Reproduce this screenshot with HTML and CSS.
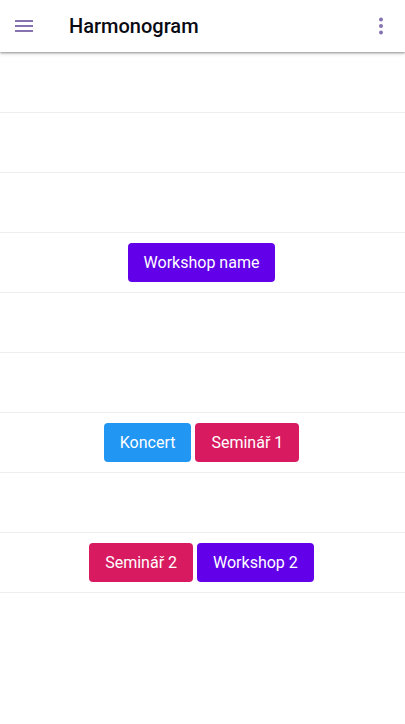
FILE: index.html
```html
<!DOCTYPE html>
<html>
<head>
<meta charset="utf-8">
<link rel="stylesheet" href="styles.css">
</head>
<body>
<header class="toolbar">
  <button class="icon-btn menu" aria-label="menu">
    <svg width="24" height="24" viewBox="0 0 24 24"><path d="M3 6h18v2H3zM3 11h18v2H3zM3 16h18v2H3z" fill="currentColor"/></svg>
  </button>
  <h1 class="title">Harmonogram</h1>
  <button class="icon-btn more" aria-label="more">
    <svg width="24" height="24" viewBox="0 0 24 24"><circle cx="12" cy="5.5" r="2" fill="currentColor"/><circle cx="12" cy="12" r="2" fill="currentColor"/><circle cx="12" cy="18.5" r="2" fill="currentColor"/></svg>
  </button>
</header>
<main class="schedule">
  <div class="row"></div>
  <div class="row"></div>
  <div class="row"></div>
  <div class="row"><span class="chip purple">Workshop name</span></div>
  <div class="row"></div>
  <div class="row"></div>
  <div class="row"><span class="chip blue">Koncert</span><span class="chip pink">Seminář 1</span></div>
  <div class="row"></div>
  <div class="row"><span class="chip pink">Seminář 2</span><span class="chip purple">Workshop 2</span></div>
</main>
</body>
</html>
```
FILE: styles.css
```css
* { box-sizing: border-box; }
html, body { margin: 0; padding: 0; background: #fff; }
body { font-family: Roboto, "Noto Sans", sans-serif; color: #111; }
.toolbar {
  position: relative;
  z-index: 2;
  height: 52px;
  display: flex;
  align-items: center;
  background: #fff;
  box-shadow: 0 1px 2px rgba(0,0,0,.35), 0 2px 4px rgba(0,0,0,.12);
}
.icon-btn {
  border: 0;
  background: none;
  padding: 0;
  display: flex;
  align-items: center;
  justify-content: center;
  color: #8672b0;
}
.menu { width: 24px; height: 24px; margin-left: 12px; }
.more { width: 24px; height: 24px; margin-left: auto; margin-right: 12px; color: #8672b0; }
.more svg { width: 24px; height: 24px; }
.title {
  margin: 0 0 0 33px;
  font-size: 20px;
  font-weight: 500;
  color: #0a0a14;
}
.schedule { padding-top: 1px; }
.row {
  height: 60px;
  border-bottom: 1px solid #eeeeee;
  display: flex;
  align-items: center;
  justify-content: center;
  gap: 4px;
  padding-right: 2px;
}
.chip {
  height: 39px;
  display: inline-flex;
  align-items: center;
  padding: 0 16px;
  border-radius: 4px;
  color: #fff;
  font-size: 16px;
  font-weight: 400;
}
.purple { background: #6200ea; }
.blue { background: #2196f3; }
.pink { background: #d81b60; }
```
